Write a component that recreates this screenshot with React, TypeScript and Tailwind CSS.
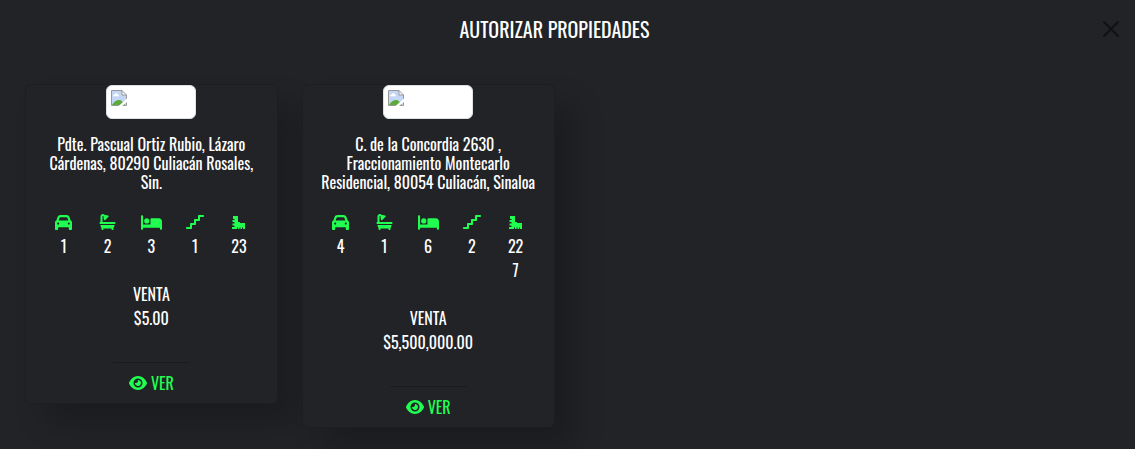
import type { ReactNode } from "react";
import { FaBath, FaBed, FaCar, FaEye, FaStairs } from "react-icons/fa6";

type Property = {
  id: number;
  address: string;
  parking: string;
  baths: string;
  beds: string;
  floors: string;
  area: string[];
  operation: string;
  price: string;
};

const properties: Property[] = [
  {
    id: 1,
    address: "Pdte. Pascual Ortiz Rubio, Lázaro Cárdenas, 80290 Culiacán Rosales, Sin.",
    parking: "1",
    baths: "2",
    beds: "3",
    floors: "1",
    area: ["23"],
    operation: "VENTA",
    price: "$5.00",
  },
  {
    id: 2,
    address: "C. de la Concordia 2630 , Fraccionamiento Montecarlo Residencial, 80054 Culiacán, Sinaloa",
    parking: "4",
    baths: "1",
    beds: "6",
    floors: "2",
    area: ["22", "7"],
    operation: "VENTA",
    price: "$5,500,000.00",
  },
];

function RulerIcon() {
  return (
    <svg className="h-4 w-4" viewBox="0 0 16 16" fill="currentColor" aria-hidden="true">
      <path d="M2 2H7V8H9V9H14V15H12V13.5H11V15H9.5V13.5H8.5V15H7V13.5H6V15H1V13H3.5V11.5H1.5V9.5H3.5V8H1.5V6H3.5V5H2Z" />
    </svg>
  );
}

function MissingPhoto() {
  return (
    <div
      role="img"
      aria-label="Foto no disponible"
      className="h-[34px] w-[90px] rounded-md border border-[#dee2e6] bg-white p-1"
    >
      <svg className="h-4 w-4" viewBox="0 0 16 16" aria-hidden="true">
        <path d="M0.5 0.5H11L15.5 5V15.5H0.5Z" fill="#c3d6f6" />
        <path d="M2 6.2a1.6 1.6 0 0 1 1.5-1.7a1.9 1.9 0 0 1 3.6 0A1.5 1.5 0 0 1 8 6.2Z" fill="#fff" />
        <path d="M1 15C3 11.5 5.5 10 8 10S12 12 14 15Z" fill="#5cab38" />
        <path d="M11 0.5V5H15.5Z" fill="#fff" />
        <path d="M0.5 0.5H11L15.5 5V15.5H0.5ZM11 0.5V5H15.5" fill="none" stroke="#989898" />
        <path d="M16.5 8L7 16.5H10.5L16.5 11.5Z" fill="#fff" />
      </svg>
    </div>
  );
}

function Feature({ label, icon, values }: { label: string; icon: ReactNode; values: string[] }) {
  return (
    <li className="flex flex-col items-center" aria-label={label}>
      <span className="flex h-6 items-center text-[#20ff50]">{icon}</span>
      {values.map((value) => (
        <span key={value}>{value}</span>
      ))}
    </li>
  );
}

function PropertyCard({ property }: { property: Property }) {
  return (
    <article className="flex flex-col items-center rounded-md border border-[#1d1e21] bg-[#222327] text-center shadow-[20px_20px_30px_rgba(0,0,0,0.2)]">
      <MissingPhoto />
      <h2 className="mt-4 px-3 leading-[19px]">{property.address}</h2>
      <ul className="mt-[18px] grid w-full grid-cols-5 px-4">
        <Feature label="Estacionamientos" icon={<FaCar className="h-[17px] w-[17px]" />} values={[property.parking]} />
        <Feature label="Baños" icon={<FaBath className="h-4 w-[17px]" />} values={[property.baths]} />
        <Feature label="Recámaras" icon={<FaBed className="h-[17px] w-[21px]" />} values={[property.beds]} />
        <Feature label="Pisos" icon={<FaStairs className="h-4 w-[18px]" />} values={[property.floors]} />
        <Feature label="Superficie" icon={<RulerIcon />} values={property.area} />
      </ul>
      <p className="mt-6">
        {property.operation}
        <br />
        {property.price}
      </p>
      <hr className="mt-8 w-[77px] border-[#1a1b1e]" />
      <a href={`#propiedad-${property.id}`} className="my-2 flex items-center gap-1 text-[#20ff50]">
        <FaEye className="h-[18px] w-[18px]" />
        VER
      </a>
    </article>
  );
}

export default function App() {
  return (
    <main className="min-h-screen bg-[#222327] font-['Oswald','Liberation_Sans_Narrow','Liberation_Sans',sans-serif] text-base text-white">
      <header className="flex h-[58px] items-center px-4">
        <h1 className="flex-1 text-center text-xl">AUTORIZAR PROPIEDADES</h1>
        <button type="button" aria-label="Cerrar" className="pl-[10px] text-[#111214]">
          <svg className="h-4 w-4" viewBox="0 0 16 16" fill="none" stroke="currentColor" strokeWidth="2" strokeLinecap="round">
            <path d="M1 1L15 15M15 1L1 15" />
          </svg>
        </button>
      </header>
      <section className="grid grid-cols-4 items-start gap-6 pt-[26px] pr-[27px] pb-5 pl-[25px]">
        {properties.map((property) => (
          <PropertyCard key={property.id} property={property} />
        ))}
      </section>
    </main>
  );
}
